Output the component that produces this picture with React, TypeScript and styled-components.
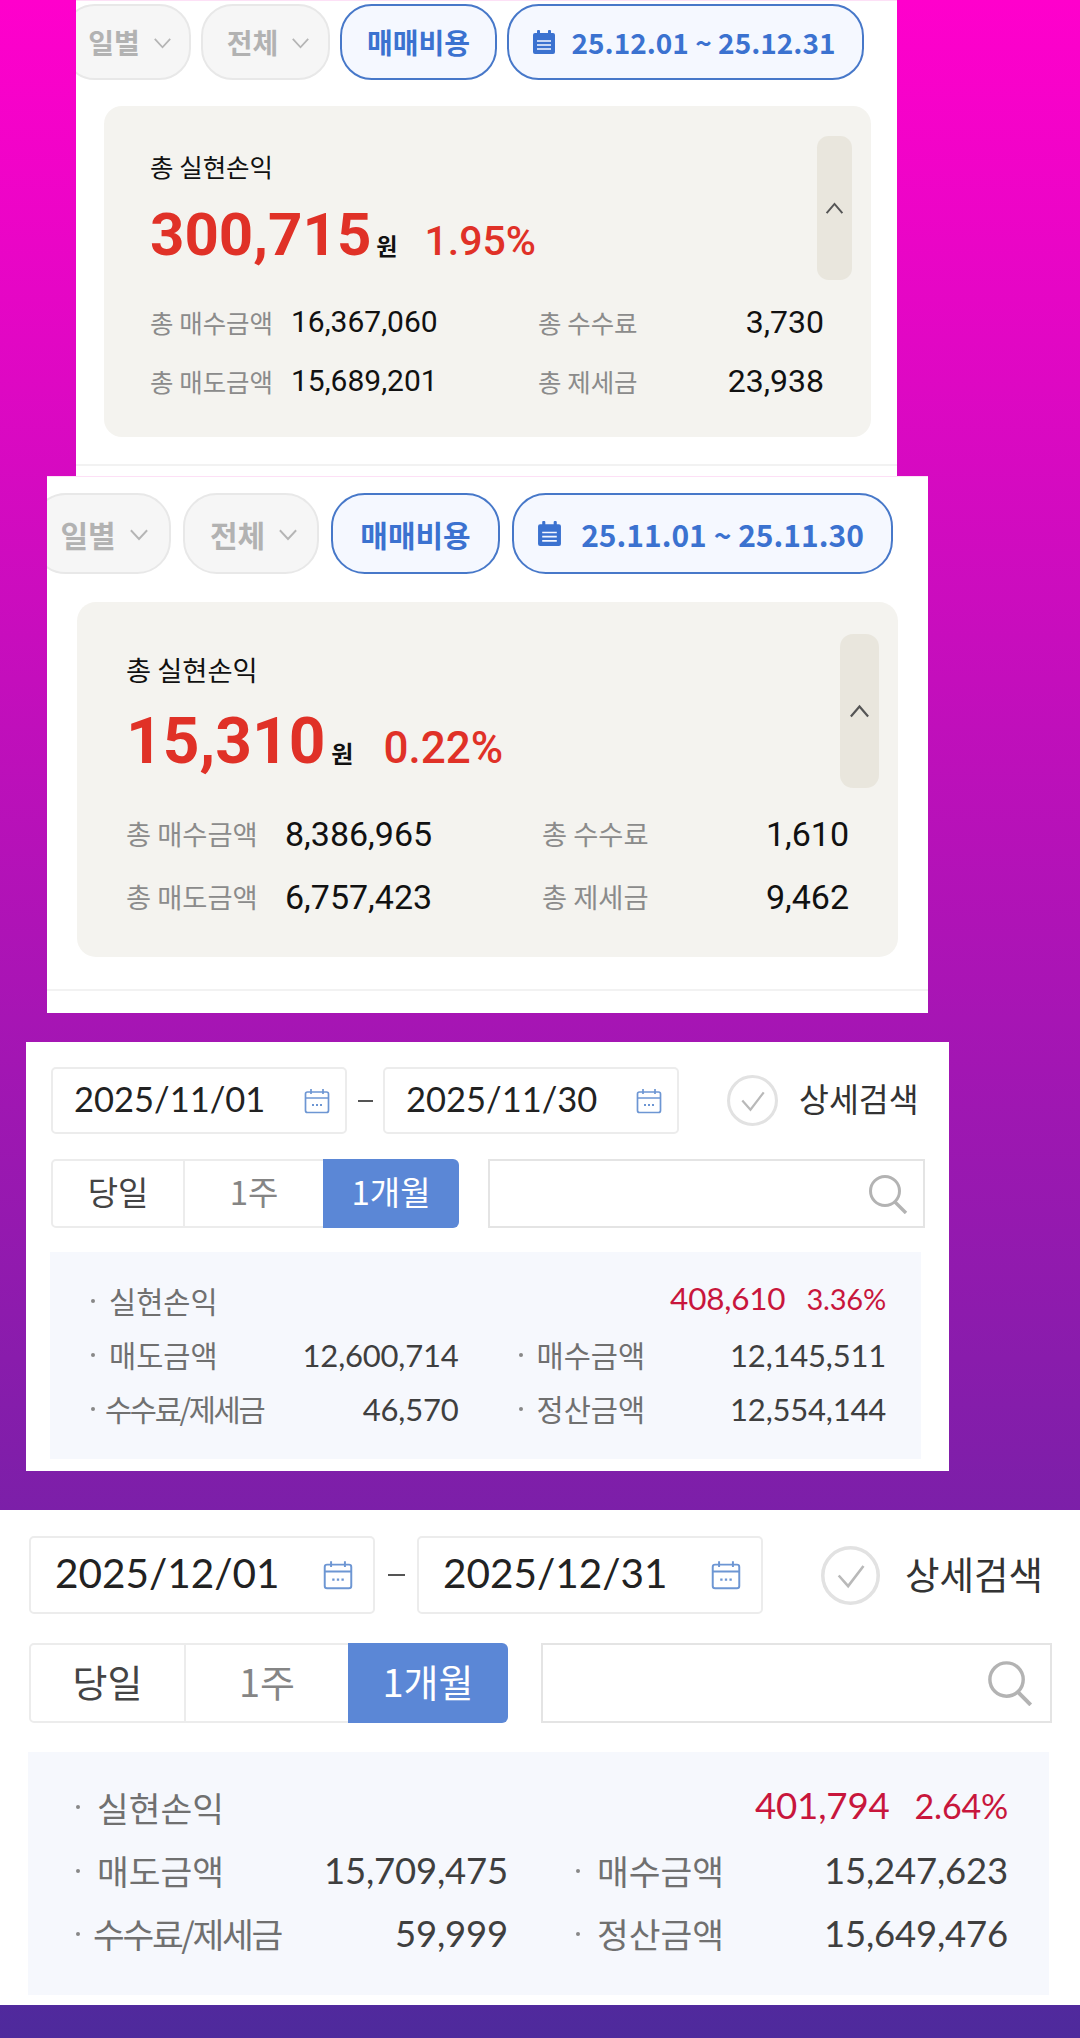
import React from 'react';
import styled, { createGlobalStyle, ThemeProvider } from 'styled-components';

const GlobalStyle = createGlobalStyle`
  html, body { margin: 0; padding: 0; }
  * { box-sizing: border-box; }
`;

const CJK = `"Noto Sans CJK KR", "Noto Sans", sans-serif`;
const ROBOTO = `Roboto, "Noto Sans CJK KR", sans-serif`;
const LATO = `Lato, "Noto Sans CJK KR", sans-serif`;

const Page = styled.div`
  width: 1080px;
  height: 2038px;
  overflow: hidden;
  background: linear-gradient(180deg, #ff00cc 0%, #4e2a9c 100%);
`;

/* ---------- upper style: account summary ---------- */
const AccountPanel = styled.section<{ $mt: number }>`
  margin-top: ${p => p.$mt}px;
  margin-left: ${p => p.theme.left}px;
  width: ${p => p.theme.width}px;
  height: ${p => p.theme.height}px;
  padding-top: ${p => p.theme.top}px;
  background: #fff;
  overflow: hidden;
  border-top: 1px solid #fde0f6;
`;
const ChipRow = styled.div`
  display: flex;
  gap: ${p => p.theme.chipGap}px;
  margin-left: ${p => p.theme.chipLead}px;
  height: ${p => p.theme.chipH}px;
`;
const Chip = styled.div<{ $w: number; $on?: boolean }>`
  flex: none;
  width: ${p => p.$w}px;
  display: flex;
  align-items: center;
  justify-content: center;
  gap: ${p => p.theme.chipInner}px;
  padding-left: ${p => (p.$on ? 0 : 6)}px;
  border-radius: ${p => p.theme.chipH / 2.4}px;
  border: 2.5px solid ${p => (p.$on ? '#4778c9' : '#e8e8e8')};
  background: ${p => (p.$on ? '#f5f8ff' : '#f6f6f6')};
  color: ${p => (p.$on ? '#3b72d0' : '#b2b2b2')};
  font: 700 ${p => p.theme.chipFont}px/1 ${CJK};
  white-space: nowrap;
`;
const DateLabel = styled.span`
  font-size: ${p => p.theme.dateFont}px;
  font-weight: 700;
  margin-left: ${p => p.theme.dateGap}px;
  margin-right: 4px;
`;
const Card = styled.div`
  margin: ${p => p.theme.cardTop}px ${p => p.theme.cardRight}px 0 ${p => p.theme.cardLeft}px;
  height: ${p => p.theme.cardH}px;
  background: #f4f3ef;
  border-radius: ${p => p.theme.cardR}px;
  padding: ${p => p.theme.handleTop}px ${p => p.theme.handleRight}px 0 ${p => p.theme.innerLeft}px;
`;
const CardTop = styled.div`
  display: flex;
  justify-content: space-between;
  height: ${p => p.theme.handleH}px;
`;
const Headline = styled.div`
  padding-top: ${p => p.theme.titleTop}px;
`;
const Title = styled.div`
  font: 400 ${p => p.theme.titleFont}px/${p => p.theme.titleLh}px ${CJK};
  color: #111;
`;
const BigRow = styled.div`
  display: flex;
  align-items: baseline;
  margin-top: ${p => p.theme.bigTop}px;
  color: #e03127;
`;
const BigValue = styled.span`
  font: 700 ${p => p.theme.bigFont}px/${p => p.theme.bigLh}px ${ROBOTO};
`;
const Won = styled.span`
  font: 700 ${p => p.theme.wonFont}px/1 ${CJK};
  color: #111;
  margin-left: ${p => p.theme.wonGap}px;
`;
const Rate = styled.span`
  font: 500 ${p => p.theme.rateFont}px/1 ${ROBOTO};
  margin-left: ${p => p.theme.rateGap}px;
`;
const Handle = styled.div`
  flex: none;
  width: ${p => p.theme.handleW}px;
  height: ${p => p.theme.handleH}px;
  border-radius: ${p => p.theme.handleW / 3}px;
  background: #e9e6dd;
  display: flex;
  align-items: center;
  justify-content: center;
`;
const Stats = styled.div`
  display: grid;
  grid-template-columns: ${p => p.theme.c1}px ${p => p.theme.c2}px 1fr auto;
  grid-auto-rows: ${p => p.theme.statRow}px;
  align-items: center;
  margin-top: ${p => p.theme.statTop}px;
  padding-right: ${p => p.theme.statRight}px;
`;
const StatLabel = styled.span`
  font: 400 ${p => p.theme.titleFont}px/1 ${CJK};
  color: #8b8b8b;
`;
const StatValue = styled.span<{ $end?: boolean }>`
  font: 400 ${p => (p.$end ? p.theme.statEndFont : p.theme.statFont)}px/1 ${ROBOTO};
  color: #111;
  justify-self: ${p => (p.$end ? 'end' : 'start')};
`;
const Divider = styled.div`
  height: 2px;
  background: #f2f2f2;
  margin-top: ${p => p.theme.divTop}px;
`;

/* ---------- lower style: search form ---------- */
const SearchPanel = styled.section<{ $mt: number }>`
  margin-top: ${p => p.$mt}px;
  margin-left: ${p => p.theme.left}px;
  width: ${p => p.theme.width}px;
  height: ${p => p.theme.height}px;
  padding: ${p => p.theme.top}px 0 0 ${p => p.theme.lead}px;
  background: #fff;
`;
const DateRow = styled.div`
  display: flex;
  align-items: center;
  height: ${p => p.theme.inputH}px;
`;
const DateInput = styled.div`
  flex: none;
  width: ${p => p.theme.inputW}px;
  height: 100%;
  display: flex;
  align-items: center;
  justify-content: space-between;
  padding: 0 ${p => p.theme.inputPadR}px 0 ${p => p.theme.inputPadL}px;
  border: 2.5px solid #ececec;
  border-radius: 5px;
  font: 400 ${p => p.theme.dateFont}px/1 ${LATO};
  color: #222;
`;
const DateText = styled.span`
  margin-bottom: 3px;
`;
const Dash = styled.span`
  flex: none;
  width: ${p => p.theme.dashGap}px;
  display: flex;
  justify-content: center;
  &::before {
    content: '';
    width: ${p => p.theme.dashW}px;
    height: 2px;
    background: #555;
  }
`;
const Detail = styled.div`
  display: flex;
  align-items: center;
  gap: ${p => p.theme.detailGap}px;
  margin-left: ${p => p.theme.detailLead}px;
  font: 400 ${p => p.theme.detailFont}px/1 ${CJK};
  color: #333;
`;
const DetailText = styled.span`
  margin-bottom: 4px;
`;
const ToolRow = styled.div`
  display: flex;
  height: ${p => p.theme.segH}px;
  margin-top: ${p => p.theme.segTop}px;
`;
const Segments = styled.div`
  display: flex;
  flex: none;
`;
const Segment = styled.div<{ $w: number; $tone: 'strong' | 'muted' | 'active' }>`
  width: ${p => p.$w}px;
  display: flex;
  align-items: center;
  justify-content: center;
  padding-bottom: ${p => p.theme.segLift}px;
  font: 400 ${p => p.theme.segFont}px/1 ${CJK};
  color: ${p => (p.$tone === 'active' ? '#fff' : p.$tone === 'strong' ? '#444' : '#858585')};
  background: ${p => (p.$tone === 'active' ? '#5b87d6' : '#fff')};
  border: ${p => (p.$tone === 'active' ? 'none' : '2.5px solid #ececec')};
  border-left-width: ${p => (p.$tone === 'muted' ? 0 : undefined)};
  border-right-width: ${p => (p.$tone === 'muted' ? 0 : undefined)};
  border-radius: ${p =>
    p.$tone === 'active' ? '0 6px 6px 0' : p.$tone === 'strong' ? '5px 0 0 5px' : '0'};
`;
const SearchBox = styled.div`
  flex: none;
  width: ${p => p.theme.searchW}px;
  margin-left: ${p => p.theme.searchLead}px;
  display: flex;
  align-items: center;
  justify-content: flex-end;
  padding-right: ${p => p.theme.searchPad}px;
  border: 2px solid #e4e4e4;
`;
const Summary = styled.div`
  width: ${p => p.theme.sumW}px;
  height: ${p => p.theme.sumH}px;
  margin-top: ${p => p.theme.sumTop}px;
  margin-left: ${p => p.theme.sumLead}px;
  padding: ${p => p.theme.sumPadT}px ${p => p.theme.sumPadR}px 0 ${p => p.theme.sumPadL}px;
  background: #f6f8fd;
  display: grid;
  grid-template-columns: 1fr 1fr;
  column-gap: ${p => p.theme.colGap}px;
  grid-auto-rows: ${p => p.theme.sumRow}px;
  align-items: center;
`;
const Line = styled.div<{ $wide?: boolean }>`
  grid-column: ${p => (p.$wide ? '1 / -1' : 'auto')};
  display: flex;
  align-items: center;
  justify-content: space-between;
`;
const LineLabel = styled.span<{ $tight?: boolean }>`
  display: flex;
  align-items: center;
  gap: ${p => (p.$tight ? p.theme.dotGap - 4 : p.theme.dotGap)}px;
  font: 400 ${p => p.theme.sumFont}px/1 ${CJK};
  letter-spacing: ${p => (p.$tight ? '-2.3px' : '0')};
  color: #707070;
  &::before {
    content: '';
    width: 4px;
    height: 4px;
    border-radius: 50%;
    background: #888;
  }
`;
const LineValue = styled.span`
  font: 400 ${p => p.theme.valFont}px/1 ${LATO};
  letter-spacing: -0.2px;
  color: #3f3f3f;
`;
const Profit = styled.span`
  display: flex;
  align-items: baseline;
  gap: ${p => p.theme.profitGap}px;
  margin-bottom: 5px;
  color: #c8163c;
  font: 400 ${p => p.theme.profitFont}px/1 ${LATO};
  letter-spacing: -0.2px;
`;
const ProfitRate = styled.span`
  font-size: ${p => p.theme.profitRate}px;
`;

/* ---------- drawings ---------- */
const Chevron = ({ size }: { size: number }) => (
  <svg width={size} height={size} viewBox="0 0 16 16" fill="none" stroke="#b5b5b5" strokeWidth="1.5">
    <path d="M1.5 5l6.5 7 6.5-7" />
  </svg>
);
const UpChevron = ({ size }: { size: number }) => (
  <svg width={size} height={size} viewBox="0 0 16 16" fill="none" stroke="#555" strokeWidth="1.5">
    <path d="M2 11.5L8 4.5l6 7" />
  </svg>
);
const FilledCalendar = ({ size }: { size: number }) => (
  <svg width={size} height={size} viewBox="0 0 22 24" fill="#3b72d0">
    <rect x="4" y="0" width="3" height="5" rx="1" />
    <rect x="15" y="0" width="3" height="5" rx="1" />
    <path d="M2 3h18a2 2 0 0 1 2 2v17a2 2 0 0 1-2 2H2a2 2 0 0 1-2-2V5a2 2 0 0 1 2-2z" />
    <path d="M4 11h14M4 15h14M4 19h14" stroke="#f5f8ff" strokeWidth="1.6" />
  </svg>
);
const OutlineCalendar = ({ size }: { size: number }) => (
  <svg width={size} height={size} viewBox="0 0 26 26" fill="none" stroke="#6d96d3" strokeWidth="1.7">
    <rect x="1.5" y="4" width="23" height="20.5" rx="2" />
    <path d="M1.5 10h23M7 1v5M19 1v5" />
    <path d="M8 17h2M12 17h2M16 17h2" strokeWidth="2" />
  </svg>
);
const CheckCircle = ({ size }: { size: number }) => (
  <svg width={size} height={size} viewBox="0 0 50 50" fill="none">
    <circle cx="25" cy="25" r="23.5" stroke="#e2e2e2" strokeWidth="3" />
    <path d="M15 25l8 9 13-17" stroke="#b9b9b9" strokeWidth="2.2" />
  </svg>
);
const Magnifier = ({ size }: { size: number }) => (
  <svg width={size} height={size} viewBox="0 0 40 40" fill="none" stroke="#b3b3b3">
    <circle cx="17" cy="17" r="14.5" strokeWidth="3" />
    <path d="M27 28l11 11" strokeWidth="3.4" />
  </svg>
);

/* ---------- panel data ---------- */
const accountA = {
  left: 76, width: 821, height: 476, top: 3, chipGap: 10, chipLead: -13, chipH: 76, chipInner: 13,
  chipFont: 28, dateFont: 28, dateGap: 3, cardTop: 26, cardRight: 26, cardLeft: 28, cardH: 331, cardR: 18,
  handleTop: 30, handleRight: 19, innerLeft: 46, handleW: 35, handleH: 144, titleTop: 15,
  titleFont: 25.5, titleLh: 30, bigTop: 18, bigFont: 60, bigLh: 72, wonFont: 23, wonGap: 5,
  rateFont: 41, rateGap: 27, c1: 141, c2: 247, statRow: 59, statTop: 12, statRight: 28,
  statFont: 30, statEndFont: 32, divTop: 27, icon: 24, chev: 19, up: 21,
};
const accountB = {
  left: 47, width: 881, height: 537, top: 16, chipGap: 12, chipLead: -15, chipH: 81, chipInner: 13,
  chipFont: 30, dateFont: 30, dateGap: 6, cardTop: 28, cardRight: 30, cardLeft: 30, cardH: 355, cardR: 19,
  handleTop: 32, handleRight: 19, innerLeft: 49, handleW: 39, handleH: 154, titleTop: 19,
  titleFont: 27.3, titleLh: 32, bigTop: 19, bigFont: 64, bigLh: 76, wonFont: 24, wonGap: 6,
  rateFont: 44, rateGap: 30, c1: 159, c2: 257, statRow: 63, statTop: 14, statRight: 30,
  statFont: 34, statEndFont: 34, divTop: 32, icon: 25, chev: 20, up: 23,
};
const searchA = {
  left: 26, width: 923, height: 429, top: 25, lead: 25, inputH: 67, inputW: 296, inputPadL: 21,
  inputPadR: 15, dateFont: 34.5, dashGap: 36, dashW: 15, detailGap: 21, detailLead: 48, detailFont: 32.5,
  segH: 69, segTop: 25, segFont: 33, segLift: 5, searchW: 437, searchLead: 29, searchPad: 15, sumW: 871, sumH: 207,
  sumTop: 24, sumLead: -1, sumPadT: 22, sumPadR: 35, sumPadL: 41, colGap: 60, sumRow: 54, dotGap: 14,
  sumFont: 29.5, valFont: 31, profitFont: 31.5, profitRate: 29, profitGap: 21, cal: 26, check: 51, mag: 40,
  segs: [134, 138, 136],
};
const searchB = {
  left: 0, width: 1080, height: 495, top: 26, lead: 29, inputH: 78, inputW: 346, inputPadL: 24,
  inputPadR: 20, dateFont: 40.5, dashGap: 42, dashW: 17, detailGap: 25, detailLead: 58, detailFont: 37.5,
  segH: 80, segTop: 29, segFont: 38, segLift: 4, searchW: 511, searchLead: 33, searchPad: 17, sumW: 1021, sumH: 243,
  sumTop: 29, sumLead: -1, sumPadT: 24, sumPadR: 41, sumPadL: 48, colGap: 68, sumRow: 63, dotGap: 17,
  sumFont: 34.5, valFont: 36.5, profitFont: 36.7, profitRate: 34, profitGap: 25, cal: 30, check: 59, mag: 46,
  segs: [157, 162, 160],
};

type AccountProps = {
  mt: number; theme: typeof accountA; widths: number[]; range: string; big: string; rate: string;
  buy: string; sell: string; fee: string; tax: string;
};
const Account = ({ mt, theme, widths, range, big, rate, buy, sell, fee, tax }: AccountProps) => (
  <ThemeProvider theme={theme}>
    <AccountPanel $mt={mt}>
      <ChipRow>
        <Chip $w={widths[0]}>일별<Chevron size={theme.chev} /></Chip>
        <Chip $w={widths[1]}>전체<Chevron size={theme.chev} /></Chip>
        <Chip $w={widths[2]} $on>매매비용</Chip>
        <Chip $w={widths[3]} $on><FilledCalendar size={theme.icon} /><DateLabel>{range}</DateLabel></Chip>
      </ChipRow>
      <Card>
        <CardTop>
          <Headline>
            <Title>총 실현손익</Title>
            <BigRow>
              <BigValue>{big}</BigValue>
              <Won>원</Won>
              <Rate>{rate}</Rate>
            </BigRow>
          </Headline>
          <Handle><UpChevron size={theme.up} /></Handle>
        </CardTop>
        <Stats>
          <StatLabel>총 매수금액</StatLabel>
          <StatValue>{buy}</StatValue>
          <StatLabel>총 수수료</StatLabel>
          <StatValue $end>{fee}</StatValue>
          <StatLabel>총 매도금액</StatLabel>
          <StatValue>{sell}</StatValue>
          <StatLabel>총 제세금</StatLabel>
          <StatValue $end>{tax}</StatValue>
        </Stats>
      </Card>
      <Divider />
    </AccountPanel>
  </ThemeProvider>
);

type SearchProps = {
  mt: number; theme: typeof searchA; from: string; to: string; profit: string; rate: string;
  sell: string; buy: string; fee: string; net: string;
};
const Search = ({ mt, theme, from, to, profit, rate, sell, buy, fee, net }: SearchProps) => (
  <ThemeProvider theme={theme}>
    <SearchPanel $mt={mt}>
      <DateRow>
        <DateInput><DateText>{from}</DateText><OutlineCalendar size={theme.cal} /></DateInput>
        <Dash />
        <DateInput><DateText>{to}</DateText><OutlineCalendar size={theme.cal} /></DateInput>
        <Detail><CheckCircle size={theme.check} /><DetailText>상세검색</DetailText></Detail>
      </DateRow>
      <ToolRow>
        <Segments>
          <Segment $w={theme.segs[0]} $tone="strong">당일</Segment>
          <Segment $w={theme.segs[1]} $tone="muted">1주</Segment>
          <Segment $w={theme.segs[2]} $tone="active">1개월</Segment>
        </Segments>
        <SearchBox><Magnifier size={theme.mag} /></SearchBox>
      </ToolRow>
      <Summary>
        <Line $wide>
          <LineLabel>실현손익</LineLabel>
          <Profit>{profit}<ProfitRate>{rate}</ProfitRate></Profit>
        </Line>
        <Line><LineLabel>매도금액</LineLabel><LineValue>{sell}</LineValue></Line>
        <Line><LineLabel>매수금액</LineLabel><LineValue>{buy}</LineValue></Line>
        <Line><LineLabel $tight>수수료/제세금</LineLabel><LineValue>{fee}</LineValue></Line>
        <Line><LineLabel>정산금액</LineLabel><LineValue>{net}</LineValue></Line>
      </Summary>
    </SearchPanel>
  </ThemeProvider>
);

export default function App() {
  return (
    <Page>
      <GlobalStyle />
      <Account mt={0} theme={accountA} widths={[128, 129, 157, 357]} range="25.12.01 ~ 25.12.31"
        big="300,715" rate="1.95%" buy="16,367,060" sell="15,689,201" fee="3,730" tax="23,938" />
      <Account mt={0} theme={accountB} widths={[139, 136, 169, 381]} range="25.11.01 ~ 25.11.30"
        big="15,310" rate="0.22%" buy="8,386,965" sell="6,757,423" fee="1,610" tax="9,462" />
      <Search mt={29} theme={searchA} from="2025/11/01" to="2025/11/30" profit="408,610" rate="3.36%"
        sell="12,600,714" buy="12,145,511" fee="46,570" net="12,554,144" />
      <Search mt={39} theme={searchB} from="2025/12/01" to="2025/12/31" profit="401,794" rate="2.64%"
        sell="15,709,475" buy="15,247,623" fee="59,999" net="15,649,476" />
    </Page>
  );
}
